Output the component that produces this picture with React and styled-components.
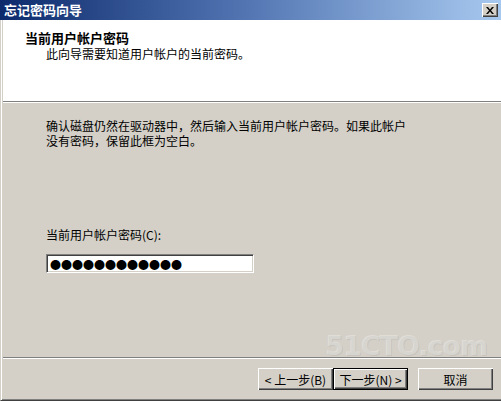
import styled, { createGlobalStyle } from "styled-components";

const Global = createGlobalStyle`
  body {
    margin: 0;
    background: #d4d0c8;
    font-family: "Noto Sans CJK SC", "Liberation Sans", sans-serif;
  }
`;

const Window = styled.div`
  position: relative;
  width: 501px;
  height: 401px;
  display: flex;
  flex-direction: column;
  background: #d4d0c8;
  overflow: hidden;
`;

const TitleBar = styled.div`
  height: 20px;
  flex: none;
  display: flex;
  align-items: center;
  justify-content: space-between;
  padding: 0 3px 0 4px;
  background: linear-gradient(to right, #0c2a6c, #5477b4 50%, #a7c9ef);
`;

const TitleText = styled.span`
  color: #fff;
  font-size: 13px;
  font-weight: bold;
  line-height: 14px;
`;

const CloseButton = styled.div`
  width: 16px;
  height: 14px;
  display: flex;
  align-items: center;
  justify-content: center;
  background: #d4d0c8;
  box-shadow: inset 1px 1px #fff, inset -1px -1px #404040, inset -2px -2px #808080;
`;

const Frame = styled.div`
  flex: 1;
  display: flex;
  flex-direction: column;
  border-left: 1px solid #d4d0c8;
  border-bottom: 1px solid #404040;
  box-shadow: inset 1px 0 #fff, inset 0 -1px #808080;
  padding-left: 2px;
`;

const Header = styled.div`
  height: 82px;
  flex: none;
  background: #fff;
  padding: 11px 0 0 22px;
  box-sizing: border-box;
  border-bottom: 1px solid #808080;
  box-shadow: 0 1px #fff;
`;

const HeaderTitle = styled.div`
  font-size: 13px;
  font-weight: bold;
  line-height: 14px;
  color: #000;
`;

const HeaderSub = styled.div`
  font-size: 12px;
  line-height: 13px;
  margin: 2px 0 0 21px;
  color: #000;
`;

const Body = styled.div`
  flex: 1;
  display: flex;
  flex-direction: column;
  padding: 15px 0 0 43px;
  margin-top: 1px;
`;

const Para = styled.div`
  font-size: 12px;
  line-height: 15px;
  color: #000;
  white-space: nowrap;
`;

const Label = styled.div`
  font-size: 12px;
  line-height: 13px;
  margin-top: 80px;
  color: #000;
`;

const PasswordBox = styled.input`
  margin-top: 13px;
  width: 208px;
  height: 19px;
  box-sizing: border-box;
  border: 1px solid;
  border-color: #808080 #fff #fff #808080;
  box-shadow: inset 1px 1px #404040, inset -1px -1px #d4d0c8;
  background: #fff;
  padding: 0 0 0 3px;
  font-family: "Noto Sans CJK SC", sans-serif;
  font-size: 11px;
  color: #000;
  outline: none;
`;

const Footer = styled.div`
  height: 43px;
  flex: none;
  border-top: 1px solid #808080;
  box-shadow: inset 0 1px #fff;
  display: flex;
  justify-content: flex-end;
  align-items: flex-start;
  padding: 10px 8px 0 0;
  box-sizing: border-box;
`;

const Button = styled.div`
  width: 75px;
  height: 22px;
  box-sizing: border-box;
  display: flex;
  align-items: center;
  justify-content: center;
  font-size: 12px;
  color: #000;
  background: #d4d0c8;
  margin-left: ${(p) => p.gap || 0}px;
  border: ${(p) => (p.primary ? "1px solid #000" : "none")};
  box-shadow: inset 1px 1px #fff, inset -1px -1px #404040, inset -2px -2px #808080;
`;

const Watermark = styled.div`
  position: absolute;
  right: 14px;
  bottom: 40px;
  font-family: "DejaVu Sans", sans-serif;
  font-weight: bold;
  font-size: 27px;
  letter-spacing: -1px;
  color: rgba(255, 255, 255, 0.3);
  text-shadow: 1px 1px rgba(120, 120, 120, 0.15);
  pointer-events: none;
`;

export default function App() {
  return (
    <Window>
      <Global />
      <TitleBar>
        <TitleText>忘记密码向导</TitleText>
        <CloseButton>
          <svg width="8" height="7" viewBox="0 0 8 7">
            <path d="M0 0h2l2 2.5L6 0h2L5 3.5 8 7H6L4 4.5 2 7H0l3-3.5z" fill="#000" />
          </svg>
        </CloseButton>
      </TitleBar>
      <Frame>
        <Header>
          <HeaderTitle>当前用户帐户密码</HeaderTitle>
          <HeaderSub>此向导需要知道用户帐户的当前密码。</HeaderSub>
        </Header>
        <Body>
          <Para>
            确认磁盘仍然在驱动器中，然后输入当前用户帐户密码。如果此帐户
            <br />
            没有密码，保留此框为空白。
          </Para>
          <Label>当前用户帐户密码(C):</Label>
          <PasswordBox readOnly value="●●●●●●●●●●●●" />
        </Body>
        <Footer>
          <Button>&lt; 上一步(B)</Button>
          <Button primary>下一步(N) &gt;</Button>
          <Button gap={10}>取消</Button>
        </Footer>
      </Frame>
      <Watermark>51CTO.com</Watermark>
    </Window>
  );
}
